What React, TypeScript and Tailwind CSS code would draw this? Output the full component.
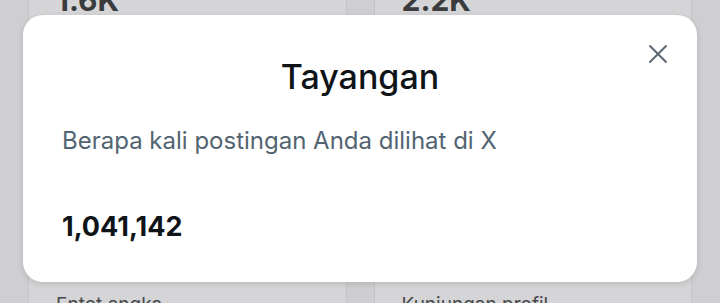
import { X } from 'lucide-react'

export default function App() {
  return (
    <div
      className="relative w-[720px] h-[303px] overflow-hidden bg-[#cfcfd1]"
      style={{ fontFamily: 'Inter, "Noto Sans", sans-serif' }}
    >
      {/* Page behind the dialog */}
      <div className="grid grid-cols-2 gap-[27px] px-[28px] h-full">
        <div className="flex flex-col justify-between bg-[#d5d5d7] border-x border-[#c4c4c6] px-[27px]">
          <div className="-mt-[22px] text-[30px] font-bold text-[#3a3b3d]">1.6K</div>
          <div className="-mb-[16px] text-[19px] text-[#46484b]">Entot angka</div>
        </div>
        <div className="flex flex-col justify-between bg-[#d5d5d7] border-x border-[#c4c4c6] px-[27px]">
          <div className="-mt-[22px] text-[30px] font-bold text-[#3a3b3d]">2.2K</div>
          <div className="-mb-[16px] text-[19px] text-[#46484b]">Kunjungan profil</div>
        </div>
      </div>

      {/* Dialog */}
      <div className="absolute left-[23px] top-[15px] w-[674px] h-[267px] bg-white rounded-[20px] shadow-[0_2px_6px_rgba(0,0,0,0.12)] px-[39px]">
        <button
          className="absolute right-[23px] top-[23px] w-[32px] h-[32px] flex items-center justify-center text-[#5b6670]"
          aria-label="Tutup"
        >
          <X className="w-[32px] h-[32px]" strokeWidth={1.4} />
        </button>
        <h2 className="pt-[40px] text-center text-[34px] leading-[44px] font-medium text-[#0f1419]">
          Tayangan
        </h2>
        <p className="mt-[27px] text-[24px] leading-[30px] text-[#536471]">
          Berapa kali postingan Anda dilihat di X
        </p>
        <p className="mt-[55px] text-[27px] leading-[32px] font-bold text-[#0f1419]">
          1,041,142
        </p>
      </div>
    </div>
  )
}
